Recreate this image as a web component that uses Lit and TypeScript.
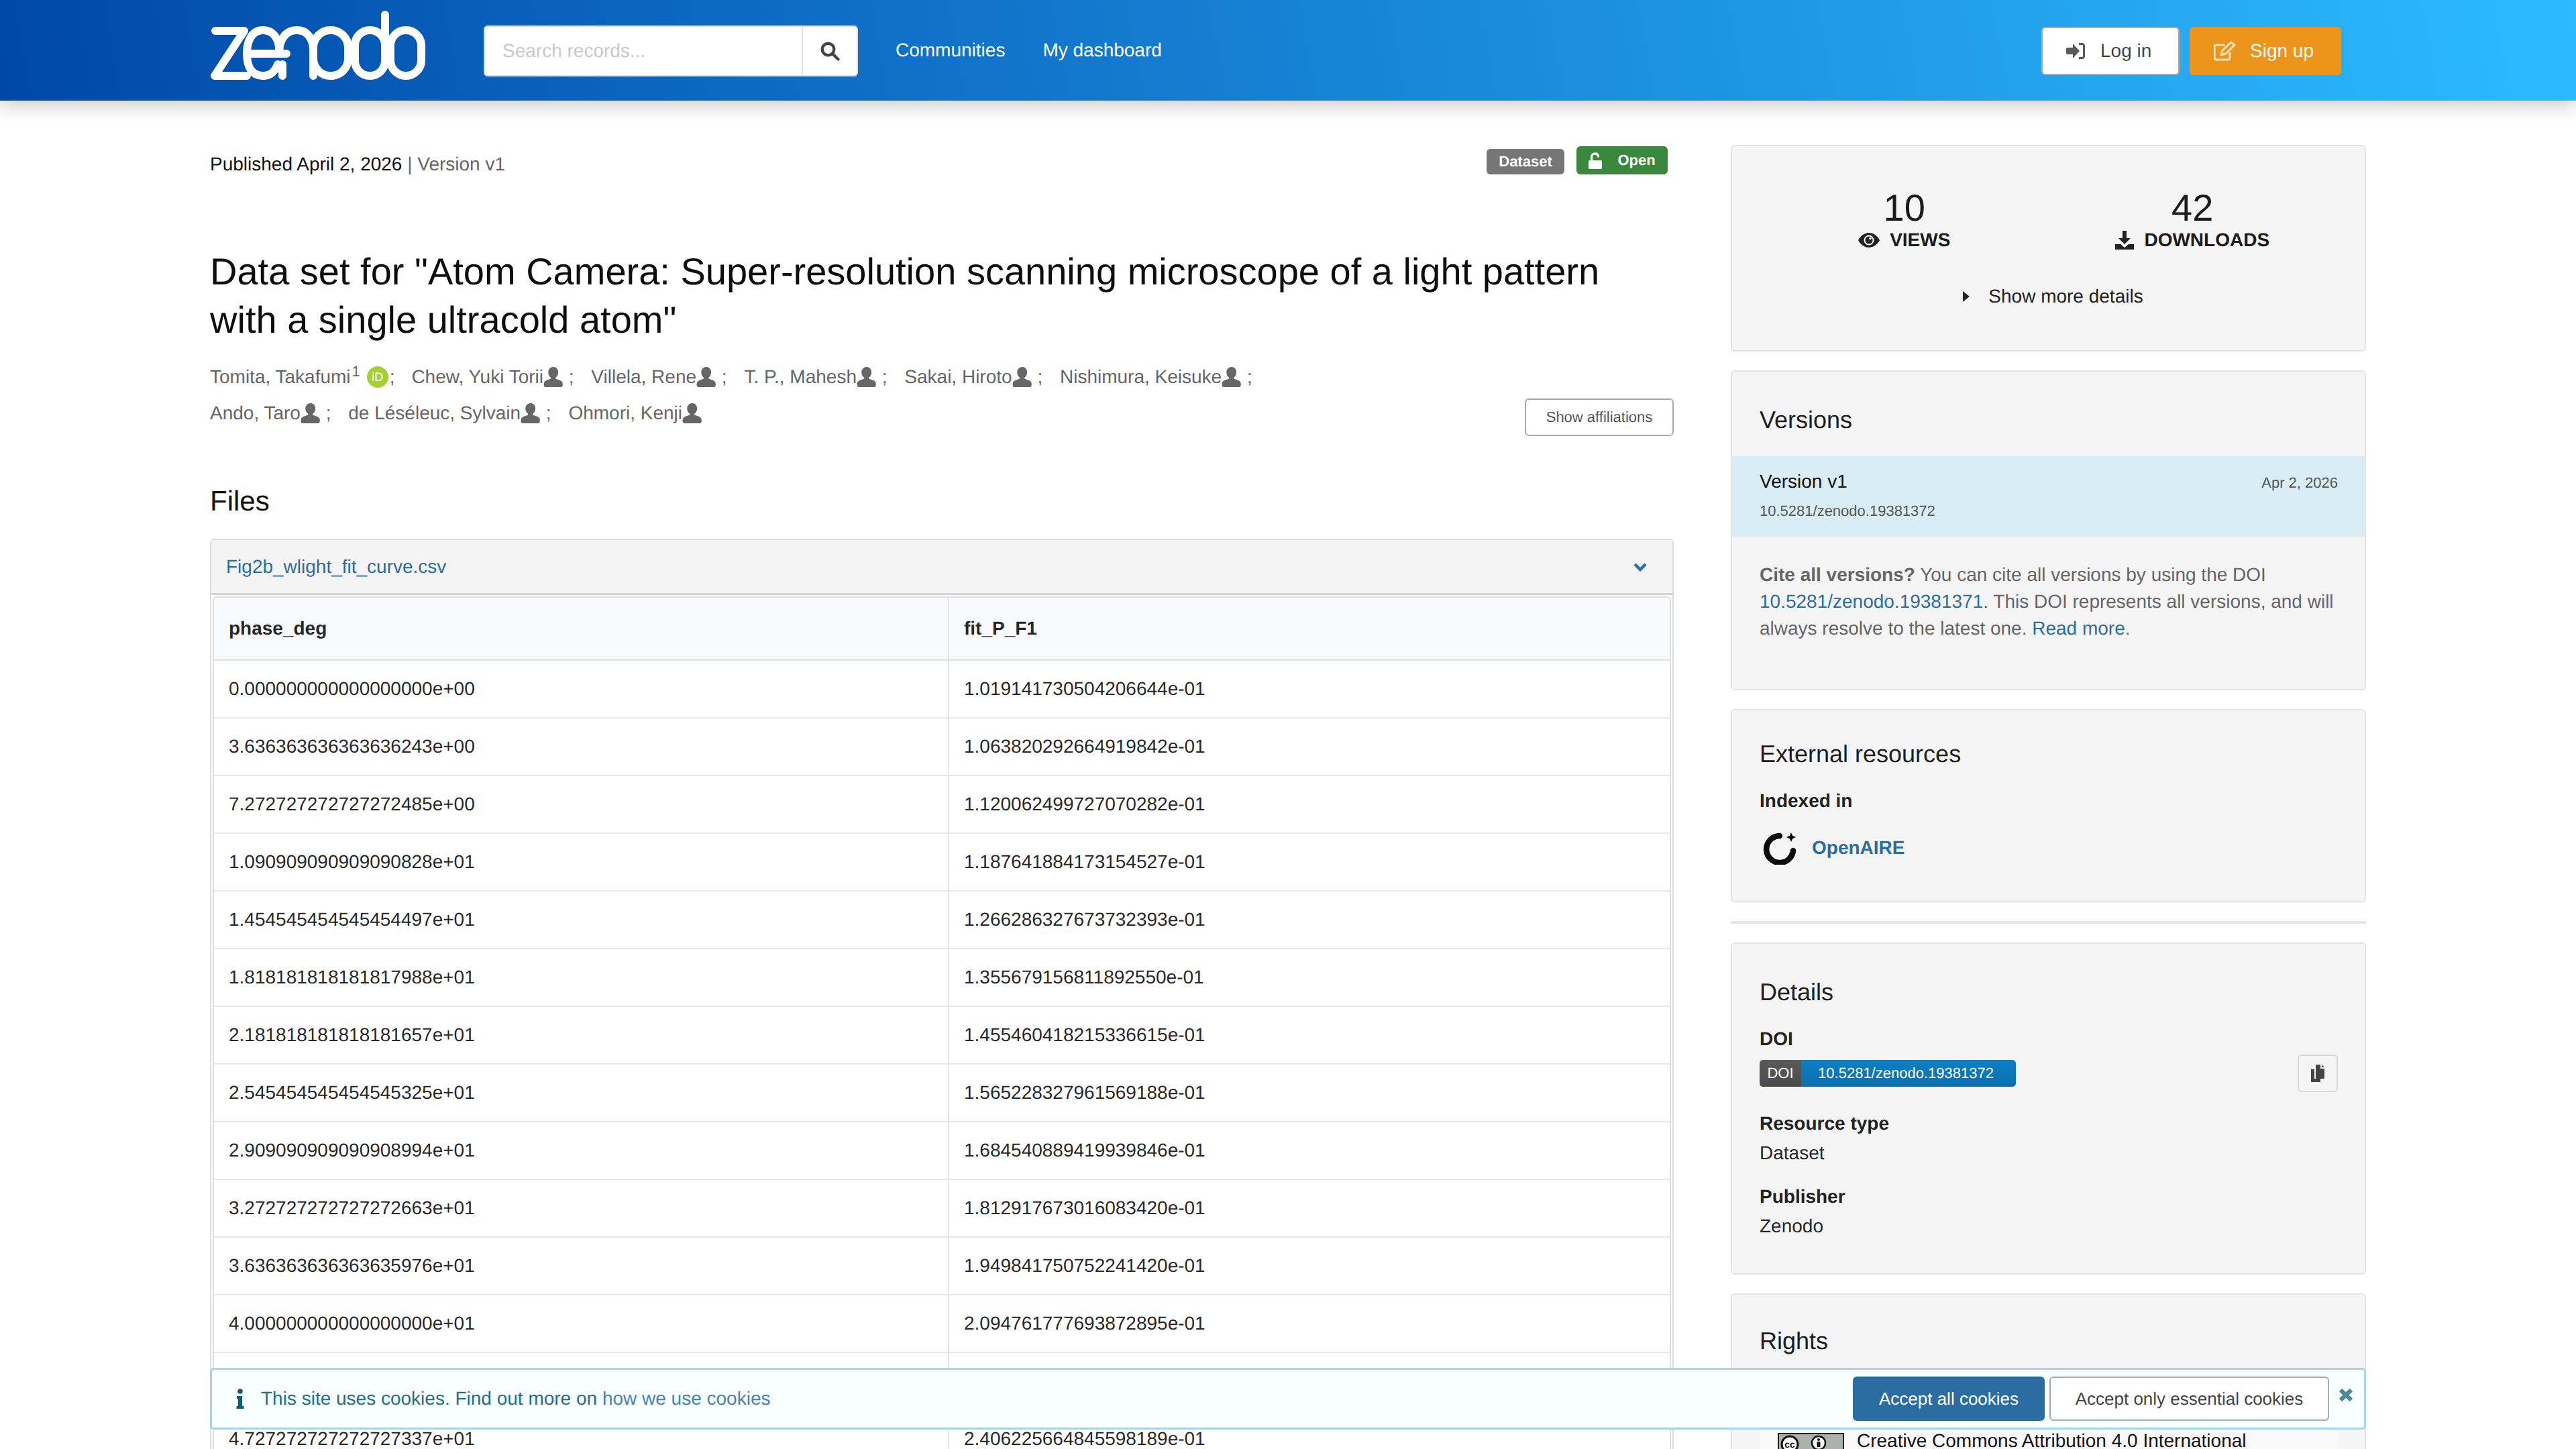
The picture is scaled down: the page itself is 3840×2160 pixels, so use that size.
import { LitElement, html, css, svg } from "lit";
import { customElement } from "lit/decorators.js";

const rows: [string, string][] = [
  ["0.000000000000000000e+00", "1.019141730504206644e-01"],
  ["3.636363636363636243e+00", "1.063820292664919842e-01"],
  ["7.272727272727272485e+00", "1.120062499727070282e-01"],
  ["1.090909090909090828e+01", "1.187641884173154527e-01"],
  ["1.454545454545454497e+01", "1.266286327673732393e-01"],
  ["1.818181818181817988e+01", "1.355679156811892550e-01"],
  ["2.181818181818181657e+01", "1.455460418215336615e-01"],
  ["2.545454545454545325e+01", "1.565228327961569188e-01"],
  ["2.909090909090908994e+01", "1.684540889419939846e-01"],
  ["3.272727272727272663e+01", "1.812917673016083420e-01"],
  ["3.636363636363635976e+01", "1.949841750752241420e-01"],
  ["4.000000000000000000e+01", "2.094761777693872895e-01"],
  ["4.363636363636363313e+01", "2.247082711040512110e-01"],
  ["4.727272727272727337e+01", "2.406225664845598189e-01"],
];

const person = svg`<path d="M12 0c3.300 0 5.700 2.800 5.700 6.400 0 2.800-1.300 5.200-3.200 6.300 0 .9.300 1.400 1.100 1.600l3.400 1.200c2.800.9 4 2.200 4 4.700v1.300c0 1.500-1 2.500-2.500 2.500H3c-1.500 0-2.500-1-2.500-2.500v-1.300c0-2.500 1.200-3.800 4-4.700l3.400-1.200c.8-.2 1.100-.7 1.100-1.600-1.900-1.100-3.200-3.500-3.200-6.300C5.800 2.800 8.700 0 12 0z"/>`;

@customElement("app-root")
export class AppRoot extends LitElement {
  static styles = css`
    :host { display: block; height: 100vh; overflow: hidden; position: relative; background: #fff;
      font-family: "Liberation Sans", Arial, sans-serif; font-size: 28px; line-height: 40px; color: rgba(0,0,0,.87); text-rendering: geometricPrecision; }
    * { box-sizing: border-box; }
    a { color: #2b6ca3; text-decoration: none; }
    svg { display: block; }
    .topbar { height: 150px; background: linear-gradient(80deg, #0048a8 0%, #2cbbff 100%);
      box-shadow: 0 6px 28px rgba(0,0,0,.22); padding: 0 313px; display: flex; align-items: flex-start; position: relative; }
    .logo { margin-top: 15px; width: 322px; height: 104px; flex: none; }
    .search { margin: 38px 0 0 86px; width: 558px; height: 76px; display: flex; background: #fff; border-radius: 6px; border: 2px solid #e0e0e0; }
    .search-input { flex: 1; padding-left: 26px; color: #c8c8c8; line-height: 72px; font-size: 28px; }
    .search-btn { width: 82px; border-left: 2px solid #e0e0e0; display: flex; align-items: center; justify-content: center; }
    .nav { margin: 0 0 0 56px; display: flex; gap: 56px; color: #fff; height: 150px; font-size: 28px; }
    .nav span { display: block; line-height: 150px; }
    .auth { margin: 40px 37px 0 auto; display: flex; gap: 15px; }
    .btn-login, .btn-signup { height: 72px; border-radius: 6px; display: flex; align-items: center; font-size: 28px; }
    .btn-login { width: 206px; background: #fff; border: 2px solid #aaa; color: rgba(0,0,0,.75); padding-left: 35px; gap: 23px; }
    .btn-signup { width: 226px; background: #ec951a; color: #fff; padding-left: 36px; gap: 20px; }
    .page { display: flex; padding: 66px 313px 0 313px; }
    .main { width: 2182px; flex: none; }
    .side { width: 947px; flex: none; margin-left: 85px; display: flex; flex-direction: column; gap: 28px; }
    .meta { display: flex; justify-content: space-between; align-items: flex-start; padding-right: 9px; height: 44px; color: #111; }
    .meta .pub { padding-top: 9px; }
    .meta .v { color: #666; }
    .badges { display: flex; gap: 18px; height: 44px; align-items: flex-end; }
    .badge { border-radius: 6px; color: #fff; font-weight: 700; font-size: 22px; display: flex; align-items: center; justify-content: center; }
    .badge.gray { background: #767676; height: 38px; width: 116px; }
    .badge.green { background: #3a873e; height: 42px; width: 136px; gap: 23px; }
    h1 { font-size: 56px; font-weight: 400; line-height: 72px; margin: 109px 0 0 0; color: rgba(0,0,0,.95); padding-right: 40px; }
    .creators-wrap { position: relative; margin-top: 22px; height: 146px; }
    .creators { color: #666; line-height: 54px; width: 1700px; }
    .creator { display: inline-flex; align-items: center; margin-right: 18px; }
    .creator.first { margin-right: 17px; }
    .creator sup { font-size: 22px; line-height: 0; margin: -16px 4px 0 2px; }
    .creator svg { fill: #666; }
    .orcid { width: 32px; height: 32px; border-radius: 50%; background: #a6ce39; color: #fff; font-size: 18px; line-height: 32px; text-align: center; margin: 0 2px 0 6px; }
    .semi { margin-left: 0; }
    .affil { position: absolute; right: 0; top: 59px; width: 222px; height: 56px; border: 2px solid #aaa; border-radius: 6px; background: #fff; color: rgba(0,0,0,.7); font-size: 22px; display: flex; align-items: center; justify-content: center; }
    h2 { font-size: 42px; font-weight: 400; line-height: 56px; margin: 38px 0 0 0; color: #111; }
    .file { margin-top: 28px; border: 2px solid #ddd; border-radius: 6px 6px 0 0; border-bottom: none; }
    .file-head { height: 82px; background: #f4f4f4; border-bottom: 3px solid #d4d4d4; display: flex; justify-content: space-between; align-items: center; padding: 0 38px 0 22px; }
    .table { margin: 2px 2px 0 2px; border: 2px solid #ddd; border-bottom: none; border-radius: 6px 6px 0 0; }
    .tr { display: grid; grid-template-columns: 1094px 1fr; height: 86px; border-bottom: 2px solid #e8e8e8; align-items: stretch; }
    .tr.th { height: 94px; background: #f9fafb; font-weight: 700; border-bottom: 2px solid #e0e1e2; border-radius: 6px 6px 0 0; }
    .td { padding: 0 22px; display: flex; align-items: center; }
    .td + .td { border-left: 2px solid #e6e6e6; }
    .card { background: #f5f5f5; border: 2px solid #e4e4e4; border-radius: 6px; position: relative; flex: none; }
    .stats { height: 308px; }
    .stat-row { display: grid; grid-template-columns: 1fr 1fr; padding: 64px 42px 0 42px; text-align: center; }
    .num { font-size: 56px; line-height: 56px; color: #1b1b1b; }
    .lbl { font-weight: 700; font-size: 28px; line-height: 36px; display: flex; justify-content: center; align-items: center; gap: 15px; margin-top: 2px; color: #1b1b1b; }
    .more { display: flex; justify-content: center; align-items: center; gap: 28px; margin-top: 46px; padding-left: 14px; color: #222; }
    .versions { height: 477px; }
    .h3 { font-size: 36px; line-height: 48px; color: #1d1d1d; padding: 48px 41px 0; }
    .vitem { background: #d9edf7; height: 120px; margin-top: 30px; padding: 18px 41px 0; position: relative; color: #111; }
    .vitem .d { position: absolute; right: 40px; top: 20px; font-size: 22px; color: #555; }
    .vitem .doi { font-size: 22px; color: #555; line-height: 32px; margin-top: 8px; }
    .cite { padding: 37px 41px 0; color: #666; line-height: 40px; }
    .ext { height: 288px; }
    .ext .h3 { padding-top: 41px; }
    .b { font-weight: 700; color: #222; }
    .indexed { padding: 26px 41px 0; }
    .oa { display: flex; align-items: center; gap: 22px; padding: 0 0 0 45px; margin-top: 25px; font-weight: 700; }
    .sep { height: 4px; background: #e6e6e6; flex: none; }
    .details { height: 495px; }
    .field { padding: 0 41px; }
    .f-doi { margin-top: 26px; }
    .f-res { margin-top: 35px; }
    .f-pub { margin-top: 25px; }
    .val { margin-top: 4px; }
    .doi-badge { display: flex; width: 382px; height: 40px; margin-top: 11px; border-radius: 5px; overflow: hidden; font-size: 22px; line-height: 40px; color: #fff; }
    .doi-badge .l { width: 62px; background: linear-gradient(#5a5a5a,#4a4a4a); text-align: center; }
    .doi-badge .r { flex: 1; background: linear-gradient(#0f7fc4,#0a6fae); text-align: center; padding-right: 8px; }
    .copy { position: absolute; right: 40px; top: 165px; width: 60px; height: 56px; border: 2px solid #d8d8d8; border-radius: 6px; display: flex; align-items: center; justify-content: center; }
    .rights { height: 400px; }
    .rights .h3 { padding-top: 45px; }
    .lic { margin: 77px 39px 0 40px; background: #f9f9f9; height: 100px; display: flex; gap: 19px; padding: 28px 0 0 28px; color: #111; align-items: flex-start; }
    .cc { margin-top: 8px; flex: none; }
    .cookie { position: absolute; left: 313px; top: 2039px; width: 3214px; height: 92px; background: #f8ffff; border: 3px solid #a9d5de; border-radius: 6px; display: flex; align-items: center; padding-left: 36px; color: #276f86; }
    .cookie .txt { margin-left: 25px; }
    .cookie a { color: #4a82b4; }
    .cookie .btns { margin-left: auto; display: flex; gap: 7px; margin-right: 52px; font-size: 26px; }
    .cbtn { height: 66px; border-radius: 6px; display: flex; align-items: center; justify-content: center; }
    .cbtn.p { width: 286px; background: #2b6ca3; color: #fff; }
    .cbtn.s { width: 417px; background: #fff; border: 2px solid #aaa; color: rgba(0,0,0,.75); }
    .x { position: absolute; right: 16px; top: 27px; }
  `;

  private person(size = 30) {
    return html`<svg width=${size} height=${size} viewBox="0 0 24 24">${person}</svg>`;
  }

  private creator(name: string, last = false) {
    return html`<span class="creator">${name}${this.person()}${last ? "" : html`<span class="semi">&nbsp;;</span>`}</span>`;
  }

  render() {
    return html`
      <header class="topbar">
        <svg class="logo" viewBox="33 15 322 104" fill="none" stroke="#fff" stroke-width="12" stroke-linecap="round" stroke-linejoin="round">
          <path d="M41 46H84L40 113H88"/>
          <path d="M93 80H147M137 78C136 58 128 45 112 45C96 45 88 60 88 80C88 100 96 113 112 113C122 113 130 107 134 96"/>
          <path d="M141 96V113M136 72C140 52 150 45 163 45C178 45 187 58 187 75V113"/>
          <rect x="187" y="45" width="52" height="68" rx="26"/>
          <rect x="249" y="45" width="45" height="68" rx="22.500"/>
          <path d="M294 22V80"/>
          <rect x="302" y="45" width="46" height="68" rx="23"/>
        </svg>
        <div class="search">
          <div class="search-input">Search records...</div>
          <div class="search-btn">
            <svg width="30" height="30" viewBox="0 0 24 24" fill="none" stroke="#444" stroke-width="3.400"><circle cx="10" cy="10" r="7"/><path d="M15.500 15.500 22 22" stroke-linecap="round"/></svg>
          </div>
        </div>
        <nav class="nav"><span>Communities</span><span>My dashboard</span></nav>
        <div class="auth">
          <div class="btn-login">
            <svg width="28" height="26" viewBox="0 0 28 26" fill="#595959"><path d="M2 8h8V2l10 11-10 11v-6H2a2 2 0 0 1-2-2v-6a2 2 0 0 1 2-2z"/><path d="M19 2.500h4.500c1.800 0 3 1.200 3 3v15c0 1.800-1.200 3-3 3H19" fill="none" stroke="#595959" stroke-width="3"/></svg>
            <span>Log in</span>
          </div>
          <div class="btn-signup">
            <svg width="34" height="30" viewBox="0 0 34 30" fill="none" stroke="#fde3bd" stroke-width="3"><path d="M24 17v8c0 2-1 3-3 3H4c-2 0-3-1-3-3V9c0-2 1-3 3-3h13"/><path d="M11 21l2-7L26 2l5 4-13 13z"/></svg>
            <span>Sign up</span>
          </div>
        </div>
      </header>

      <div class="page">
        <main class="main">
          <div class="meta">
            <div class="pub">Published April 2, 2026 <span class="v">| Version v1</span></div>
            <div class="badges">
              <div class="badge gray">Dataset</div>
              <div class="badge green">
                <svg width="20" height="25" viewBox="0 0 20 25" fill="#fff"><path d="M2 12h16a2 2 0 0 1 2 2v9a2 2 0 0 1-2 2H2a2 2 0 0 1-2-2v-9a2 2 0 0 1 2-2z"/><path d="M4.500 12V7a5 5 0 0 1 5-5 5 5 0 0 1 5 4" fill="none" stroke="#fff" stroke-width="3.400" stroke-linecap="round"/></svg>
                Open
              </div>
            </div>
          </div>
          <h1>Data set for "Atom Camera: Super-resolution scanning microscope of a light pattern with a single ultracold atom"</h1>
          <div class="creators-wrap">
            <div class="creators">
              <span class="creator first">Tomita, Takafumi<sup>1</sup><span class="orcid">iD</span>;</span>
              ${this.creator("Chew, Yuki Torii")}
              ${this.creator("Villela, Rene")}
              ${this.creator("T. P., Mahesh")}
              ${this.creator("Sakai, Hiroto")}
              ${this.creator("Nishimura, Keisuke")}
              ${this.creator("Ando, Taro")}
              ${this.creator("de Léséleuc, Sylvain")}
              ${this.creator("Ohmori, Kenji", true)}
            </div>
            <div class="affil">Show affiliations</div>
          </div>
          <h2>Files</h2>
          <div class="file">
            <div class="file-head">
              <a>Fig2b_wlight_fit_curve.csv</a>
              <svg width="20" height="14" viewBox="0 0 20 14" fill="none" stroke="#2b6ca3" stroke-width="4.500"><path d="M2 3l8 8 8-8"/></svg>
            </div>
            <div class="table">
              <div class="tr th"><div class="td">phase_deg</div><div class="td">fit_P_F1</div></div>
              ${rows.map((r) => html`<div class="tr"><div class="td">${r[0]}</div><div class="td">${r[1]}</div></div>`)}
            </div>
          </div>
        </main>

        <aside class="side">
          <div class="card stats">
            <div class="stat-row">
              <div>
                <div class="num">10</div>
                <div class="lbl">
                  <svg width="32" height="22" viewBox="0 0 32 22"><path fill-rule="evenodd" fill="#222" d="M16 0c7 0 13 5 16 11-3 6-9 11-16 11S3 17 0 11C3 5 9 0 16 0zm0 3.500a7.500 7.500 0 1 0 0 15 7.500 7.500 0 0 0 0-15z"/><circle cx="16" cy="11" r="5.500" fill="#222"/><circle cx="18" cy="8.500" r="1.800" fill="#f5f5f5"/></svg>
                  VIEWS
                </div>
              </div>
              <div>
                <div class="num">42</div>
                <div class="lbl">
                  <svg width="28" height="28" viewBox="0 0 28 28" fill="#222"><path d="M11 0h6v11h6L14 20 5 11h6z"/><path d="M0 20h8l6 5 6-5h8v8H0z"/></svg>
                  DOWNLOADS
                </div>
              </div>
            </div>
            <div class="more">
              <svg width="10" height="20" viewBox="0 0 10 20" fill="#222"><path d="M0 2l10 8-10 8z"/></svg>
              <span>Show more details</span>
            </div>
          </div>

          <div class="card versions">
            <div class="h3">Versions</div>
            <div class="vitem">
              Version v1
              <div class="d">Apr 2, 2026</div>
              <div class="doi">10.5281/zenodo.19381372</div>
            </div>
            <div class="cite"><b>Cite all versions?</b> You can cite all versions by using the DOI <a>10.5281/zenodo.19381371</a>. This DOI represents all versions, and will always resolve to the latest one. <a>Read more</a>.</div>
          </div>

          <div class="card ext">
            <div class="h3">External resources</div>
            <div class="indexed b">Indexed in</div>
            <div class="oa">
              <svg width="52" height="50" viewBox="0 0 52 50" fill="none"><path d="M26 7A20 20 0 1 0 46 29" stroke="#0a0a0a" stroke-width="8.500" stroke-linecap="round"/><path d="M43 2l2.200 4.800L50 9l-4.800 2.200L43 16l-2.200-4.800L36 9l4.800-2.200z" fill="#0a0a0a"/></svg>
              <a>OpenAIRE</a>
            </div>
          </div>

          <div class="sep"></div>

          <div class="card details">
            <div class="h3">Details</div>
            <div class="field f-doi"><div class="b">DOI</div>
              <div class="doi-badge"><div class="l">DOI</div><div class="r">10.5281/zenodo.19381372</div></div>
            </div>
            <div class="copy">
              <svg width="20" height="26" viewBox="0 0 20 26" fill="#444"><path d="M0 7h5v14h9v5H1a1 1 0 0 1-1-1z"/><path d="M7 0h7v6h6v14a1 1 0 0 1-1 1H8a1 1 0 0 1-1-1z"/><path d="M16 0l4 4h-4z"/></svg>
            </div>
            <div class="field f-res"><div class="b">Resource type</div><div class="val">Dataset</div></div>
            <div class="field f-pub"><div class="b">Publisher</div><div class="val">Zenodo</div></div>
          </div>

          <div class="card rights">
            <div class="h3">Rights</div>
            <div class="lic">
              <svg class="cc" width="99" height="36" viewBox="0 0 99 36">
                <rect x="1" y="1" width="97" height="34" fill="#aab2ab" stroke="#222" stroke-width="2"/>
                <circle cx="18" cy="17" r="12" fill="#fff" stroke="#111" stroke-width="3"/>
                <text x="18" y="22" font-size="14" font-weight="700" text-anchor="middle" font-family="Liberation Sans" fill="#111">cc</text>
                <circle cx="61" cy="15" r="10" fill="#fff" stroke="#111" stroke-width="2.500"/>
                <circle cx="61" cy="10" r="2" fill="#111"/>
                <rect x="58.500" y="13" width="5" height="8" fill="#111"/>
              </svg>
              <span>Creative Commons Attribution 4.0 International</span>
            </div>
          </div>
        </aside>
      </div>

      <div class="cookie">
        <svg width="12" height="30" viewBox="0 0 12 30" fill="#145a72"><circle cx="6" cy="4" r="3.800"/><path d="M1 11h8v15h2.500v4H.5v-4H3V15H1z"/></svg>
        <span class="txt">This site uses cookies. Find out more on <a>how we use cookies</a></span>
        <div class="btns">
          <div class="cbtn p">Accept all cookies</div>
          <div class="cbtn s">Accept only essential cookies</div>
        </div>
        <svg class="x" width="22" height="21" viewBox="0 0 22 21" fill="none" stroke="#4f8a9a" stroke-width="6.500"><path d="M3 3l16 15M19 3L3 18"/></svg>
      </div>
    `;
  }
}
